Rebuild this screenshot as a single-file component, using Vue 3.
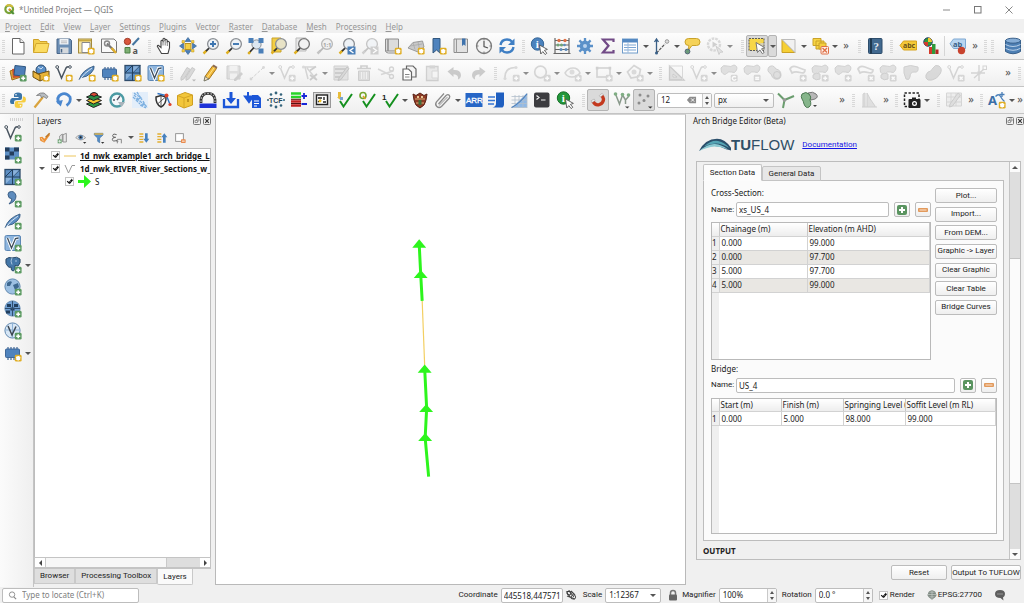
<script setup>
import { ref } from 'vue'

/* ---------- icon building blocks (18 x 18 grid) ---------- */
const badge = (fill, sign = 'M14.2 12.2v4M12.2 14.2h4', x = 0, y = 0) =>
  `<g transform="translate(${x} ${y})"><rect x="10.8" y="10.8" width="6.8" height="6.8" rx="1.4" fill="${fill}"/><path d="${sign}" stroke="#fff" stroke-width="1.5" fill="none"/></g>`
const add = badge('#5c9a62')
const star = badge('#e0ae24', 'M14.2 12v4.4M12.2 13l4 2.4M16.2 13l-4 2.4')
const greyAdd = badge('#c6c6c6')
const greyX = badge('#c6c6c6', 'M12.7 12.7l3 3M15.7 12.7l-3 3')
const greyDash = badge('#c6c6c6', 'M12.2 13.4h4M12.2 15.2h4')
const lens = (inside = '', c = '#8b8f94', f = '#eef2f6') =>
  `<path d="M1.5 16.5l3-2.8" stroke="#e0b020" stroke-width="2.4"/><path d="M4 14.2l3.4-3.4" stroke="#333" stroke-width="1.8"/><circle cx="11" cy="7" r="5.4" fill="${f}" stroke="${c}" stroke-width="1.3"/>${inside}`
const vee = (c = '#4a5560') =>
  `<path d="M2 3l4.5 11L11 4q1-1.5 4-1" fill="none" stroke="${c}" stroke-width="1.5"/><circle cx="2.2" cy="3" r="1.4" fill="#fff" stroke="${c}"/><circle cx="15" cy="3" r="1.3" fill="#fff" stroke="${c}"/>`
const feather = '<path d="M1 16Q4 6 16 2Q17 5 13 9Q9 13 3.5 13.5z" fill="#5d8fc4" stroke="#36597f" stroke-width=".9"/><path d="M1.5 16Q6 9 14 4" stroke="#d8e6f4" fill="none"/>'
const chip = '<path d="M4 3v13M7 3v13M10 3v13M13 3v13" stroke="#3f6797" stroke-width="1.2"/><rect x="1.5" y="5" width="14" height="8.5" rx="1" fill="#4f83bd" stroke="#3f6797"/>'
const mesh = '<rect x="1" y="1.5" width="15" height="15" fill="#5d8fc4" stroke="#2f4c6b" stroke-width="1.3"/><path d="M1 9h15M8.500 1.500v15M1 9l7.500-7.500M8.500 9l7.500-7.500M8.500 16.500V9" stroke="#23405f" fill="none"/><path d="M9.200 8.300V2.200h5.800zM1.700 15.800V9.700h6.100z" fill="#9fc2e6" opacity=".7"/>'
const vbox = '<rect x="1" y="1.500" width="15.500" height="15" rx="1.500" fill="#8fb6df" stroke="#5c87b5"/><path d="M3.500 4l4 10 4-9.500 3-.5" stroke="#fff" stroke-width="3.200" fill="none"/><path d="M3.500 4l4 10 4-9.500 3-.5" stroke="#3d4c5b" stroke-width="1.300" fill="none"/>'
const globe = (f) => `<circle cx="8.500" cy="8.500" r="7.600" fill="${f}" stroke="#6289b0"/>`
const greyPoly = '<path d="M1 4q2-3.500 6-2t7-1q4 1 2.500 5t-5 2q-3-1-5 1.500T1.500 8z" fill="#d3d3d3" stroke="#bcbcbc"/>'
const greyLoop = '<path d="M1 5q2-4 7-2t8 3q0 4-5 2.500T3 9z" fill="none" stroke="#c4c4c4" stroke-width="1.800"/>'
const check = '<path d="M5 10l3.500 5.500L17 3" stroke="#15901f" stroke-width="2" fill="none"/>'
const cursor = '<path d="M9.500 8l1.300 9 2-2.400 2.400 3 1.600-1.400-2.400-2.800 3-1z" fill="#fff" stroke="#555" stroke-width=".9"/>'

const icons = {
  new: '<path d="M3.500 1.500h7.500l4 4v11.500h-11.500z" fill="#fff" stroke="#666"/><path d="M11 1.500v4h4" fill="#eee" stroke="#666"/>',
  open: '<path d="M1.500 15.500v-13h5l1.500 2h7v3" fill="#f3cf4d" stroke="#cfa228"/><path d="M1.500 15.500l2.500-9h13l-2 9z" fill="#fbdc62" stroke="#d3a82e"/>',
  save: '<path d="M2 2h13l1.500 1.500V16.500H2z" fill="#6c8fb5" stroke="#486689"/><path d="M4.500 2h9v5.500h-9z" fill="#eef2f6"/><path d="M5 10.500h8.500v6H5z" fill="#d5d9dd"/><path d="M6.500 12v3.500" stroke="#486689" stroke-width="1.500"/><path d="M6 4h6M6 5.700h6" stroke="#aaa" stroke-width=".7"/>',
  layout: '<rect x="1.500" y="2" width="13" height="14" fill="#f5e5a5" stroke="#a48a3a"/><path d="M5 5.500h8v10H5z" fill="#fff" stroke="#888"/><path d="M2 3.500h12" stroke="#c8a840" stroke-width="1.800"/>' + star,
  layouts: '<path d="M1.500 2h12.500l2.500 2.500v11H1.500z" fill="#fafafa" stroke="#777"/><path d="M7 6.500l7.500 7.500" stroke="#777" stroke-width="2.200"/><circle cx="7" cy="6.500" r="2.500" fill="none" stroke="#888" stroke-width="1.400"/><path d="M11.500 11l4.500 5" stroke="#dfae2d" stroke-width="2.400"/>',
  style: '<circle cx="4.500" cy="4.500" r="3.200" fill="#d9573d" stroke="#9f3a28"/><path d="M9.500 8L16 1" stroke="#44749f" stroke-width="2"/><path d="M2 10.500h5v5.500H2z" fill="#7db073" stroke="#4d8046"/><text x="9.500" y="16.500" font-size="9" font-family="Noto Sans" font-weight="bold" fill="#555">a</text>',
  hand: '<path d="M5.500 16.500L2 10.500q-1.500-2 .3-2.200L5 10.500V4q.8-1.600 2 0V2q1-1.500 2 0v1q1.200-1.300 2.200.3v1.500q1.500-1 2.300.5V11l-1.500 5.500z" fill="#fff" stroke="#444" stroke-width="1.100"/><path d="M7 4v4.500M9.200 3v5.500M11.300 5v4" stroke="#666" stroke-width=".8"/>',
  panto: '<rect x="6" y="6.500" width="6" height="6" fill="#f5cf45" stroke="#b8921f"/><path d="M9 .5l3 4H6zM9 17.500l3-4H6zM.5 9l4-3v6zM17.500 9l-4-3v6z" fill="#4a7fb8" stroke="#335f90" stroke-width=".6"/><path d="M3 3.500h2.500v2.500H3zM12.500 3.500h2.500v2.500h-2.500zM3 12.500h2.500V15H3zM12.500 12.500h2.500V15h-2.500z" fill="#f5cf45" stroke="#b8921f" stroke-width=".5"/>',
  zin: lens('<path d="M11 4v6M8 7h6" stroke="#3b74b0" stroke-width="1.900"/>'),
  zout: lens('<path d="M8 7h6" stroke="#3b74b0" stroke-width="1.900"/>'),
  zfull: '<circle cx="9.500" cy="7.500" r="4.600" fill="#dbe6f1" stroke="#8b8f94"/><path d="M1.500 1h5v5h-5zM11.500 1h5v5h-5zM11.500 11.500h5v5h-5z" fill="#4a7fb8"/><path d="M1.500 16.500L7 10.500" stroke="#333" stroke-width="1.800"/><path d="M1.200 16.800l2-2" stroke="#e0b020" stroke-width="2.400"/>',
  zsel: '<path d="M2 1h9v14H2z" fill="#f3cf45" stroke="#c9a22a"/>' + lens('', '#8b8f94', '#e8e3c6'),
  zlayer: '<path d="M3 1h10v13H3z" fill="#e8e8e8" stroke="#bbb"/>' + lens('', '#777', '#f2f2f2'),
  z11: lens('<text x="7" y="9.500" font-size="6" font-weight="bold" font-family="Noto Sans" fill="#777">1:1</text>', '#999', '#eee').replace('#e0b020', '#aaa').replace('#333', '#999'),
  zlast: lens() + '<rect x="9.500" y="9.500" width="8" height="8" fill="#4a7fb8"/><path d="M15.500 11l-3.500 2.500 3.500 2.500" stroke="#fff" stroke-width="1.400" fill="none"/>',
  znext: lens('', '#aaa').replace('#e0b020', '#bbb').replace('#333', '#aaa') + '<rect x="9.500" y="9.500" width="8" height="8" fill="#bbb"/><path d="M12 11l3.500 2.500-3.500 2.500" stroke="#fff" stroke-width="1.400" fill="none"/>',
  newmap: '<path d="M1.500 2h2.500v12H1.500zM4 2h10.500v12H4z" fill="#dcdcdc" stroke="#8d8d8d"/><path d="M1.500 14q.5 2 3 2h8" fill="none" stroke="#8d8d8d"/>' + star,
  new3d: '<path d="M1 11L6 5.500 15.500 4l1.500 6-6 5z" fill="#c9c9c9" stroke="#9a9a9a"/><path d="M6 5.500l2 7M11 5l1.500 7M3 9l12-2" stroke="#aaa" stroke-width=".8"/>' + star,
  bmnew: '<path d="M4 1.500h7V16l-3.500-3L4 16z" fill="#4f83bd" stroke="#33587f"/>' + star,
  bm: '<path d="M2 2h13.500v13.500H2z" fill="#e2e2e2" stroke="#8d8d8d"/><path d="M4.500 2v13.500" stroke="#999"/><path d="M10 1.500h3.500v7.500l-1.700-1.600L10 9z" fill="#3f73ad"/>',
  clock: '<circle cx="9" cy="9" r="7.500" fill="#f3f3f3" stroke="#7a7a7a" stroke-width="1.300"/><path d="M9 4v5.500l4 1.500" stroke="#555" stroke-width="1.200" fill="none"/><path d="M9 2v1.500M9 14.500V16M2 9h1.500M14.500 9H16" stroke="#777"/>',
  refresh: '<path d="M2.500 8q1-5.500 6.500-5.500 3 0 5 2.300" stroke="#3f7fc4" stroke-width="2.400" fill="none"/><path d="M16.500 1.500v6.500h-6.500z" fill="#3f7fc4"/><path d="M15.500 10q-1 5.500-6.500 5.500-3 0-5-2.300" stroke="#3f7fc4" stroke-width="2.400" fill="none"/><path d="M1.500 16.500v-6.500h6.500z" fill="#3f7fc4"/>',
  identify: '<circle cx="7.500" cy="7" r="6.200" fill="#4b82bd" stroke="#376798"/><text x="5.800" y="11" font-size="11" font-weight="bold" font-family="Liberation Serif" fill="#fff">i</text>' + cursor,
  abacus: '<path d="M2 1v15.500M16 1v15.500M.5 16.500h17M2 3.500h14M2 8h14M2 12.500h14" stroke="#676767" stroke-width="1.200"/><g fill="#de6f45"><circle cx="6" cy="3.500" r="1.700"/><circle cx="12" cy="3.500" r="1.700"/></g><g fill="#70a375"><circle cx="5" cy="8" r="1.500"/><circle cx="8.500" cy="8" r="1.500"/></g><g fill="#5d8bbb"><circle cx="8" cy="12.500" r="1.500"/><circle cx="13" cy="12.500" r="1.500"/><circle cx="11.500" cy="8" r="1.300"/></g>',
  gear: '<path d="M9 1v16M1 9h16M3.400 3.400l11.200 11.200M14.600 3.400L3.400 14.600" stroke="#5b91c9" stroke-width="2.300"/><circle cx="9" cy="9" r="5.400" fill="#5b91c9"/><circle cx="9" cy="9" r="2" fill="#b9d3ee"/>',
  sigma: '<path d="M14.500 5V2.500H4l5.500 6.300L4 15.500h10.500V13" stroke="#714a86" stroke-width="2.200" fill="none"/>',
  table: '<rect x="1.500" y="2" width="15" height="14" fill="#fff" stroke="#6f9bc9"/><path d="M1.500 2h15v3.500h-15z" fill="#5489c2"/><path d="M3 8h12M3 10.500h12M3 13h12" stroke="#7ba5d3" stroke-width="1.200"/><path d="M7 5v11" stroke="#9dbbdc"/>',
  measure: '<path d="M4.500 16.500V3M2.500 5l2-3 2 3" stroke="#395f87" stroke-width="1.300" fill="none"/><path d="M4.500 16L13 7" stroke="#555" stroke-width="1.200" stroke-dasharray="3 1"/><circle cx="4.500" cy="16" r="1.500" fill="#395f87"/><circle cx="15" cy="4.500" r="1.800" fill="#ddd" stroke="#999"/>',
  tip: '<path d="M2 5q0-3.500 3.500-3.500h8Q17 1.500 17 5t-3.500 3.500H9L5.500 13l.3-4.500Q2 8.500 2 5z" fill="#f5d258" stroke="#c9a22a"/><circle cx="4.500" cy="14.500" r="2.400" fill="#6a9a7a" stroke="#567"/>',
  play: '<circle cx="8" cy="7.500" r="6" fill="none" stroke="#c9c9c9" stroke-width="2.400" stroke-dasharray="2.600 1"/><path d="M6.500 4.500l5 3-5 3z" fill="#bbb"/><path d="M10 9l7 6-3 .3-1 2.200z" fill="#ddd" stroke="#bbb"/>',
  select: '<rect x="1" y="1.500" width="15" height="12" fill="#f7d748"/><path d="M12.500 2v4h3.500v7.500h-8v-1.500h4" fill="#cfcfcf" opacity=".8"/><rect x="1" y="1.500" width="15" height="12" fill="none" stroke="#5b5b5b" stroke-dasharray="2 1"/><path d="M8 5.500l1.500 10 2.300-2.600 2.600 3.800 1.800-1.300-2.700-3.600 3-1.300z" fill="#fff" stroke="#777"/>',
  selval: '<path d="M2 2.500l13 13H2z" fill="#f5cf35" stroke="#caa024"/><path d="M2 2.500h13v13z" fill="#f1f1f1" stroke="#bbb"/>',
  desel: '<path d="M2 1.500h8v7H2zM5 4h8v8H5z" fill="#f7d443" stroke="#c9a22a"/><path d="M8 6h7v6H8z" fill="#f5cf3f" stroke="#c9a22a"/><rect x="10" y="9.500" width="7.500" height="7.500" rx="1" fill="#fff1ea" stroke="#de7048"/><path d="M11.500 11l4.500 4.500M16 11l-4.500 4.500" stroke="#de7048" stroke-width="1.300"/>',
  help: '<rect x="2.500" y="1.500" width="13.500" height="15" rx="1" fill="#41698f" stroke="#2e4d6b"/><path d="M5 1.500v15" stroke="#1f3950" stroke-width="2"/><text x="7.500" y="13" font-size="11" font-family="Liberation Serif" font-weight="bold" fill="#e7eef5">?</text>',
  abc: '<path d="M4.500 4h13v9h-13L1 8.500z" fill="#f4c939" stroke="#d7a41f"/><text x="4" y="11" font-size="7" font-weight="bold" font-family="Noto Sans" fill="#6a531a">abc</text>',
  diagram: '<circle cx="6" cy="5" r="4.200" fill="#2f9a3b" stroke="#236"/><path d="M6 5V.8A4.200 4.200 0 0 1 10 5z" fill="#efc52f"/><path d="M6 5H1.800A4.200 4.200 0 0 0 6 9.200z" fill="#d43a2a"/><path d="M7 10h3v7H7z" fill="#d43a2a"/><path d="M10 7h3.500v10H10z" fill="#2f9a3b"/><path d="M13.500 12.500H16.500V17h-3z" fill="#b42520"/>',
  label: '<path d="M4.500 2h12v9.500h-12L1 6.800z" fill="#b8d5f0" stroke="#7fa9d3"/><text x="4" y="9.500" font-size="7.500" font-weight="bold" font-family="Noto Sans" fill="#3a5f86">ab</text><circle cx="12.500" cy="13.500" r="3.700" fill="#c8432e"/>',
  db: '<path d="M1.500 3.500v11q7.500 4.500 15 0v-11z" fill="#4d7fb4" stroke="#375f8a"/><ellipse cx="9" cy="3.700" rx="7.500" ry="2.500" fill="#86add6" stroke="#375f8a"/><path d="M1.500 7.500q7.500 4 15 0M1.500 11.300q7.500 4 15 0" stroke="#b9d0e8" fill="none"/>',

  source: '<path d="M1 7l9-3 2 9-9 3z" fill="#e0a63a" stroke="#a06f1e"/><path d="M3 5l8-1 1 9-8 1z" fill="#c8522f"/><path d="M6 1.500l10.500 1.200-1 9.500L5 11z" fill="#4d7fb8" stroke="#2f5681"/>' + add,
  pack: '<circle cx="9" cy="6" r="5" fill="#5a8fc7" stroke="#2b4c70"/><path d="M6 3l3 2 2-2" stroke="#cfe0f2" fill="none"/><path d="M1 7l5 3 11-3v6l-9 4-7-4z" fill="#e9b43d" stroke="#6e5216"/><path d="M1 7l7 4v6" stroke="#6e5216" fill="none"/>' + star,
  vnew: vee() + star, feathernew: feather + star, chipnew: chip + star, meshnew: mesh + star, vboxnew: vbox + star,
  pencils: '<path d="M2 13.500L8 3.500l3 1.800-6 9.500-3 1.500zM7 13l6-9.500 3 1.800-6 9.500-3 1.500z" fill="#c9c9c9" stroke="#b1b1b1"/><path d="M13 15.500h4l-2 2z" fill="#999"/>',
  pencil: '<path d="M3 12.500L10.500 2l4 2.500L7 15z" fill="#f1b93a" stroke="#a5761d"/><path d="M3 12.500l4 2.500-5 2z" fill="#f3dfbf" stroke="#776"/><path d="M5 13.800L12.500 3.200" stroke="#ffe28a"/><path d="M10.500 2l1-1.500 4 2.600-1 1.400z" fill="#8a6a55"/>',
  savegrey: '<path d="M2 2h13v13H2z" fill="#d2d2d2" stroke="#b9b9b9"/><path d="M4.500 2h8v5h-8zM5 9.500h7V15H5z" fill="#eee"/><path d="M9 15l7-7 2 2-7 7H9z" fill="#bbb"/>',
  linegrey: '<path d="M3 15L15 4" stroke="#bbb" stroke-dasharray="3 1.500"/><circle cx="3" cy="15" r="1.400" fill="#c8c8c8"/><circle cx="15.500" cy="3.500" r="1.400" fill="#c8c8c8"/>',
  vgrey: vee('#c2c2c2') + greyAdd,
  vertex: '<path d="M2 3h12M4 3l3 12M6 4l9 11" stroke="#c2c2c2" stroke-width="1.500"/><path d="M9 6.500l6-4M9 11l7 5M9 16l7-6" stroke="#b6b6b6" stroke-width="1.700"/><circle cx="2.500" cy="3" r="1.600" fill="#ccc"/>',
  multiedit: '<path d="M2 2h14v14H2z" fill="#d9d9d9" stroke="#bbb"/><path d="M3 5h11M3 9h9M3 13h7" stroke="#aaa" stroke-width="1.300"/><path d="M7 14l8-11 2 1.500-8 11-3 1z" fill="#c9c9c9" stroke="#aaa"/>',
  trash: '<path d="M2 4.500h14M6 4.500V2h6v2.500" stroke="#b9b9b9" stroke-width="1.700" fill="none"/><path d="M3.500 7h11v9.500h-11z" fill="#d0d0d0" stroke="#b9b9b9"/><path d="M6.500 8v7M9 8v7M11.500 8v7" stroke="#eee"/>',
  cut: '<path d="M1 5l12 6M4 10.500L16.500 7" stroke="#c6c6c6" stroke-width="1.500"/><circle cx="14.500" cy="12.500" r="2" fill="none" stroke="#c0c0c0" stroke-width="1.300"/><circle cx="14.500" cy="5" r="2" fill="none" stroke="#c0c0c0" stroke-width="1.300"/>',
  copy: '<path d="M6.500 2h6.500l3 3v8H6.500z" fill="#f4f4f4" stroke="#666" stroke-width="1.200"/><path d="M3 5h5.500l3 3v8H3z" fill="#fff" stroke="#666" stroke-width="1.200"/><path d="M5 10.500h4.500M5 13h4.500" stroke="#888"/>',
  paste: '<path d="M3.500 2.500h11.500v14H3.500z" fill="#e2e2e2" stroke="#bcbcbc" stroke-width="1.300"/><path d="M6.500 1.500h5.500v3H6.500z" fill="#c3c3c3"/><path d="M9 7h6v7H9z" fill="#f4f4f4" stroke="#c8c8c8"/>',
  undo: '<path d="M1.500 7.500L7.500 3v3q7-.5 7.500 5 0 3-3 4.500 1-5-4.500-5.200V13z" fill="#b4b4b4"/>',
  redo: '<path d="M16.500 7.500L10.500 3v3Q3.500 5.500 3 11q0 3 3 4.500-1-5 4.500-5.200V13z" fill="#b4b4b4"/>',
  curve: '<path d="M3 15Q2 4 13 3.500" stroke="#c4c4c4" stroke-width="1.700" fill="none"/><circle cx="3" cy="14.500" r="1.500" fill="#ccc"/><circle cx="14" cy="3.500" r="1.500" fill="#ccc"/>' + greyAdd,
  circ: '<circle cx="7.500" cy="8" r="5.800" fill="none" stroke="#c4c4c4" stroke-width="1.700"/>' + greyAdd,
  ell: '<path d="M1 9q3-5 8-5t7 5q-3 4-8 4T1 9z" fill="none" stroke="#c4c4c4" stroke-width="1.500"/><circle cx="8" cy="8" r="2.500" fill="#cfcfcf"/>' + greyAdd,
  rect: '<rect x="2" y="4" width="13" height="9" fill="none" stroke="#c4c4c4" stroke-width="1.700"/><path d="M.8 2.800h2.600v2.600H.8zM13.600 2.800h2.600v2.600h-2.600z" fill="#bbb"/>' + greyAdd,
  poly: '<path d="M8 1.500l6.500 4-1.500 7-8 1.500-3.500-6z" fill="none" stroke="#c4c4c4" stroke-width="1.700"/><circle cx="8" cy="8" r="2.500" fill="#ccc"/>' + greyAdd,
  tri: '<path d="M2.500 2v14H17z" fill="#d3d3d3" stroke="#b4b4b4" stroke-width="1.300"/><path d="M6 10v3h4z" fill="#f8f8f8" stroke="#b4b4b4"/><path d="M2.500 2h13v14" fill="none" stroke="#c9c9c9"/>',
  p1: greyPoly + badge('#c6c6c6', 'M15.800 13.200a1.900 1.900 0 1 0 .2 1.800'), p2: greyPoly + greyDash,
  p3: '<path d="M3 3q4-3 7 2 5 1 5 6t-6 4q-3-1-4-5Q0 7 3 3z" fill="#d3d3d3" stroke="#b9b9b9"/><circle cx="11" cy="11" r="3.500" fill="none" stroke="#b4b4b4"/>',
  p4: greyLoop + greyAdd, p5: greyPoly + '<path d="M2 11q3-3 7-1v5q-4 2-7-1z" fill="#d3d3d3" stroke="#bbb"/>' + greyAdd, p6: greyPoly + greyAdd, p7: greyLoop + greyX,
  p8: greyPoly + '<path d="M2 11q3-3 7-1v5q-4 2-7-1z" fill="#d3d3d3" stroke="#bbb"/>' + greyX,
  p9: '<path d="M2 3q6-3 14 0 1 6-4 5-4 0-4 5-1 4-4 2Q1 9 2 3z" fill="#d0d0d0" stroke="#bbb"/>',
  p10: '<path d="M3 8q3 0 5-4t6-2q4 3 1 8t-8 6-6-2 2-6z" fill="#cbcbcb" stroke="#b9b9b9"/>',
  vsplit: vee('#c2c2c2') + greyX,
  trim: '<path d="M9 1v6M1 9h6M9 11v6M11 9h4M4 14l10-9" stroke="#c2c2c2" stroke-width="1.400"/><circle cx="9" cy="9" r="2" fill="#c2c2c2"/><rect x="13" y="2" width="3.500" height="3.500" fill="none" stroke="#c2c2c2"/>',

  python: '<path d="M9 1.500q-4 0-4 2.500v2h4.500v1H3q-2 .5-2 3.500T3.500 13H5v-2q0-2 2.500-2H11q2-.2 2-2V4q0-2.500-4-2.500z" fill="#3b75a8"/><path d="M9.500 17q4 0 4-2.500v-2H9v-1h6q2-.5 2-3T15 5.500h-1.200V8q0 2-2.300 2H8q-2.300 0-2.300 2v2.500Q5.700 17 9.500 17z" fill="#f6cd3f"/><circle cx="7" cy="3.800" r=".8" fill="#fff"/><circle cx="11.500" cy="14.800" r=".8" fill="#fff"/>',
  hammer: '<path d="M2.500 16.500L11 6" stroke="#d9a33d" stroke-width="2.200"/><path d="M4.500 4.500Q8 1 12 2l4 3.500-1.500 2-3.300-2.200L9.500 7 8.500 4.200z" fill="#b7bcc1" stroke="#777" stroke-width=".8"/>',
  reload: '<path d="M4 12.500Q1 6 6 3.500t9 2.500q1.500 5-3.500 8.500" stroke="#4a87cf" stroke-width="2.800" fill="none"/><path d="M.8 10.500l7-1.500-2 6.500z" fill="#4a87cf"/>',
  layers: '<path d="M1.500 13l7 3.500 8-3.500-8-3z" fill="#2c9a44" stroke="#222"/><path d="M1.500 9.500l7 3.500 8-3.500-8-3z" fill="#f2c531" stroke="#222"/><path d="M1.500 6l7 3.500 8-3.500-8-3z" fill="#2b8b47" stroke="#222"/><path d="M5 3.500q4-4 8 0l-4 2z" fill="#dc4733" stroke="#222"/>',
  dial: '<circle cx="9" cy="9" r="6.500" fill="#f3f8fa" stroke="#4b9aa3" stroke-width="2.300"/><path d="M9 9l3-4M5 9h2" stroke="#556" stroke-width="1.300"/><path d="M10 11h7l-3.500 5z" fill="#a9b4bb"/>',
  scatter: '<rect x="1" y="1" width="16" height="16" fill="#e3eefa"/><path d="M3 2l7 5-4 1 8 6-5 0 6 3M6 1l5 8M2 6l7 7M12 10l4 7M3 4l9 9" stroke="#7db0e0" stroke-width="1.300" stroke-dasharray="3 1" fill="none"/>',
  shield: '<path d="M2 6l5-1.500L12 6q.5 7-5 10Q1.500 13 2 6z" fill="#fff" stroke="#333" stroke-width="1.500"/><path d="M3.500 13L11 6.500M7 5v10" stroke="#555"/><path d="M3.500 2.500l9 2 3.500 9" stroke="#3074c5" stroke-width="1.400" fill="none"/><circle cx="12.500" cy="4.500" r="2" fill="#e0442c"/><circle cx="16" cy="13.500" r="1.600" fill="#e0442c"/>',
  box: '<path d="M1.500 4.500L9 1.500l7.500 2.500v10L8 17l-6.500-3z" fill="#f2c63b" stroke="#cf9f20"/><path d="M1.500 4.500L8 7l8.500-3M8 7v10" stroke="#d6a626" fill="none"/><path d="M12 8v3" stroke="#a77c14" stroke-width="1.300"/>',
  arch: '<path d="M2 12V8.500Q2.800 2.300 9 2.300T16 8.500V12" fill="none" stroke="#333" stroke-width="2.800"/><path d="M2 11V8.500Q2.800 2.300 9 2.300T16 8.500V11" fill="none" stroke="#bbb" stroke-width="1.200" stroke-dasharray="1.500 1.500"/><path d="M.5 12.500h17v4.500H.5z" fill="#1e33d8"/>',
  dl: '<path d="M2 8v8h14V8" stroke="#1c56d8" stroke-width="2.300" fill="none"/><path d="M7.500 1h3v6h3.500L9 13 4 7h3.500z" fill="#1c56d8"/>',
  dlfile: '<path d="M8 4h6l3 3v10H8z" fill="#1c56d8"/><path d="M10 10h5M10 12.500h5M10 15h3" stroke="#fff" stroke-width="1.100"/><path d="M4 1v5M1 5.500h8L5 11z" fill="#1c56d8" stroke="#1c56d8" stroke-width="2"/>',
  tcf: '<g fill="#35647b"><circle cx="9" cy="2" r="1.400"/><circle cx="4" cy="3.500" r="1.300"/><circle cx="14" cy="3.500" r="1.300"/><circle cx="9" cy="16" r="1.400"/><circle cx="4" cy="14.500" r="1.300"/><circle cx="14" cy="14.500" r="1.300"/><circle cx="1" cy="9" r="1"/><circle cx="17" cy="9" r="1"/></g><text x="2" y="11.500" font-size="7" font-weight="bold" font-family="Liberation Sans" fill="#1f4457">TCF</text>',
  bars: '<path d="M1 2.500h10M1 6h10" stroke="#27d427" stroke-width="2.400"/><path d="M1 10.500h10M1 14.500h10" stroke="#c22020" stroke-width="2.400"/><path d="M1 8.300h10M1 12.500h10" stroke="#511"/><path d="M14 2v6M11.500 5h5.500M11.500 13h5.500" stroke="#1726d8" stroke-width="1.800"/>',
  calc: '<rect x=".5" y="1.500" width="17" height="15" fill="#ddd" stroke="#999"/><rect x="3.500" y="4" width="11" height="9.500" fill="#fff" stroke="#222" stroke-width="1.400"/><path d="M5 7h4M11 6v3M5 11l3-2M10 11h3" stroke="#222" stroke-width="1.400"/><circle cx="7" cy="10" r="1.400" fill="#f0c020"/>',
  ck1: check + '<path d="M3 1h3v5H3zM2 6h5L4.500 8.500z" fill="#e8bd3b"/><path d="M5 6h3v3H5z" fill="#7aa4d0"/>',
  ck2: check + '<circle cx="5" cy="4.500" r="3" fill="none" stroke="#74a52e" stroke-width="1.600"/><path d="M5 5l2.500 3" stroke="#e0a020" stroke-width="1.500"/>',
  ck3: check + '<text x="1" y="8.500" font-size="8" font-weight="bold" font-family="Liberation Sans" fill="#222">1</text>',
  crest: '<path d="M2 3l3 1.500L9 2l4 2.500L16 3l-1 6q-1 6-6 8-5-2-6-8z" fill="#8f3a25" stroke="#5a2317"/><path d="M4 8h10M5 12h8" stroke="#d9b079"/><path d="M6 5h2v2H6zM10 5h2v2h-2z" fill="#e8c896"/><path d="M7.500 9h3v5h-3z" fill="#3f6a3a"/>',
  clip: '<path d="M4.500 13L12 4.500q2-1.500 3.200-.2t0 3L7.500 15.500q-2.500 2-4.700 0t-.3-4.700L10 2.500" stroke="#8a8a8a" stroke-width="1.300" fill="none"/><path d="M5 14.500L13.500 6" stroke="#bbb" stroke-width="1.300"/>',
  arr: '<rect x=".5" y="2" width="17" height="14" fill="#2766c6"/><text x="1" y="12" font-size="8" font-family="Liberation Sans" fill="#fff" stroke="#fff" stroke-width=".3">ARR</text>',
  bluedoc: '<path d="M9 1.500h8v12q0 2-1.500 3H5.500q3.500-1 3.500-4z" fill="#1f5fc0"/><path d="M1 6h7M1 9.500h7M1 13h6" stroke="#3676d3" stroke-width="1.700"/>',
  gridplot: '<path d="M17 2v14.500H2z" fill="#8fb8e6"/><path d="M1.500 5.500h15.500M1.500 9h15.500M1.500 12.500h15.500M1.500 16.500h15.500M5 4v13M9 4v13M13 4v13M17 2v15" stroke="#b3bfcc" stroke-width=".8"/><path d="M1.500 16.500Q9 13 17 3" stroke="#4a7db8" stroke-width="1.100" fill="none"/>',
  term: '<rect x="1" y="1.500" width="15.500" height="15" rx="2" fill="#3c3c40"/><path d="M3.500 4.500l2.500 2-2.500 2M8 9h4.500" stroke="#f2f2f2" stroke-width="1.200" fill="none"/>',
  info: '<circle cx="7.500" cy="7" r="6.200" fill="#23973b" stroke="#187029"/><text x="5.800" y="11" font-size="11" font-weight="bold" font-family="Liberation Serif" fill="#fff">i</text>' + cursor,
  magnet: '<path d="M4 10.500q2.500 4.500 6.500 3t4-5.500q-.5-2.500-2.500-4" stroke="#c4391f" stroke-width="3.400" fill="none"/><path d="M2 9.800l3.200-1.800 1 1.600L3 11.500zM10.300 4.600l2.800-2.300 1.200 1.400-2.800 2.400z" fill="#eee" stroke="#999" stroke-width=".5"/>',
  vsnap: '<path d="M2.500 3l4 10 3-9M9.500 4l3 5 3.500-4M12.500 9v4" stroke="#8a9a8c" stroke-width="1.500" fill="none"/><g fill="#7fae83"><circle cx="2.500" cy="3" r="1.800"/><circle cx="9.500" cy="3.500" r="1.800"/><circle cx="15.500" cy="4" r="1.800"/></g><path d="M12 15.500h4.500l-2.200 2z" fill="#444"/>',
  dots: '<g fill="#8c8c8c"><circle cx="5" cy="4" r="1.500"/><circle cx="13" cy="5" r="1.500"/><circle cx="9" cy="9.500" r="1.500"/><circle cx="4" cy="12" r="1.500"/></g><path d="M13 15.500h4.500l-2.200 2z" fill="#333"/>',
  ypoly: '<path d="M1 2.500l6.500 6.500L17 5M7.500 9L6 17" stroke="#6a9d6e" stroke-width="2" fill="none"/><circle cx="7.500" cy="9" r="1.800" fill="#999"/>',
  blob: '<path d="M8 2q5-2 8 1t-1 5l-4 1z" fill="#b7b7b7" stroke="#777"/><path d="M2 3q4-3 7 0t1 6q2 5-1 7t-5-3q-.5-3-2-5T2 3z" fill="#86b58b" stroke="#4a7950"/><path d="M13 14h4l-2 2z" fill="#444"/>',
  hist: '<path d="M3 16V3l2-1v14M7 16V2q2 5 8 13v1" fill="#d5d5d5" stroke="#bcbcbc"/><path d="M2 16h15" stroke="#bcbcbc"/>',
  shot: '<rect x="1.500" y="2" width="14.500" height="13.500" fill="none" stroke="#222" stroke-width="1.500" stroke-dasharray="2.400 1.600"/><rect x="5.500" y="8" width="12" height="9" rx="1" fill="#222"/><path d="M9 6.500h4v2H9z" fill="#222"/><circle cx="11.500" cy="12.500" r="2.500" fill="#fff"/><circle cx="11.500" cy="12.500" r="1.200" fill="#222"/>',
  gridpen: '<path d="M1.500 2h15v13h-15zM1.500 6h15M1.500 11h15M6 2v13M11 2v13" fill="#e8e8e8" stroke="#c4c4c4"/><path d="M5 13l8-11 2.500 2-8 11-3 1z" fill="#d2d2d2" stroke="#b5b5b5"/>',
  atext: '<text x="0" y="13.500" font-size="13" font-weight="bold" font-family="Noto Sans" fill="#3b6fa8">A</text><path d="M7.500 5.500q3-3.500 5 0t4 5M14 1v5M11.500 3.500h5" stroke="#4a7fb8" stroke-width="1.300" fill="none"/>' + star,

  vadd: vee() + add,
  raster: '<path d="M1 1.500h14v12H1z" fill="#5d8fc4"/><path d="M1 1.500h4.500v4H1zM10 1.500h5v4h-5zM5.500 5.500H10v4H5.500zM1 9.500h4.500v4H1z" fill="#243e5c"/>' + add,
  meshadd: mesh + add,
  comma: '<path d="M4 4.500q0-3 3.500-3T12 6q0 5.500-7 8 3-3 2.800-5.200Q4 8.500 4 4.500z" fill="#5d8bbd" stroke="#3c5f86"/>' + add,
  featheradd: feather + add, vboxadd: vbox + add,
  pg: '<path d="M2 3q3-2.500 6-1 5-2 8 1 1 4-2 7l-3-.5q.5 5-2 5.500-2 0-2-4-1.500 1-3-.5Q1 8 2 3z" fill="#4477a8" stroke="#2c4b6b"/><path d="M8 2q-2 3 0 6.500M12 4v2" stroke="#a8c3df" fill="none"/>' + add,
  wms: globe('#9cc0e3') + '<path d="M3 5q3-3 5-1l-2 4-3 0zM9 7l5-2 1 4-4 3z" fill="#3e6890"/>' + add,
  wcs: globe('#6f9fd2') + '<path d="M3 4h4v3H3zM10 4h4v3h-4zM6.500 7.500h4v3h-4zM2 10.500h4v3H2z" fill="#223f5e"/><path d="M1 8.500h15M8.500 1v15" stroke="#2f4f70"/>' + add,
  wfs: globe('#d6e6f5') + '<path d="M1 8h15M8.500 1v15" stroke="#8eb2d6"/><path d="M4 4l4 9 4-8.500" stroke="#3b4650" stroke-width="1.500" fill="none"/>' + add,

  brush: '<path d="M1 8l4-1 3 3 7-7 1.500 1.500L11 12l-3 4-6-3z" fill="#ed9136"/><path d="M3 9l4 5" stroke="#fff" stroke-width=".8"/><path d="M10 8l6-6" stroke="#b9772a" stroke-width="2.200"/>',
  group: '<path d="M4 15V6l4-3v12M9 15V4l5-2v13z" fill="#e9e9e9" stroke="#8b8b8b" stroke-width="1.300"/><path d="M1 11h6v6H1z" fill="#6fa476"/><path d="M4 12v4M2 14h4" stroke="#fff"/>',
  eye: '<path d="M1 8.500q7-8 15 0-7 7-15 0z" fill="#e6e6e6" stroke="#999" stroke-width="1.300"/><circle cx="8.500" cy="8" r="3.500" fill="#527fae"/><circle cx="8.500" cy="8" r="1.500" fill="#222"/><path d="M12 15h5l-2.500 2.500z" fill="#333"/>',
  filter: '<path d="M2 2h13v2.500L10 9v7l-3-2V9L2 4.500z" fill="#5790c9" stroke="#3a6ea5"/><path d="M2 2h13v2H2z" fill="#f0b83a"/><path d="M12 15h5l-2.500 2.500z" fill="#333"/>',
  eps: '<path d="M8.500 4Q3 1.500 2.500 5t4.500 3Q1.500 8 2 11.500t7 1" stroke="#666" stroke-width="1.500" fill="none"/><path d="M9.500 17v-6h6v6M8 14h3" stroke="#888" stroke-width="1.500" fill="none"/>',
  expand: '<path d="M2 3h6M2 7h6M2 11h6M2 15h6" stroke="#e2ae30" stroke-width="2"/><path d="M10.500 2h4v8h2.500l-4.500 6L8 10h2.500z" fill="#4681bf"/>',
  collapse: '<path d="M2 3h6M2 7h6M2 11h6M2 15h6" stroke="#e2ae30" stroke-width="2"/><path d="M10.500 16h4V8h2.500L12.500 2 8 8h2.500z" fill="#4681bf"/>',
  remove: '<rect x="2.500" y="2.500" width="11.500" height="11.500" fill="#fff" stroke="#888" stroke-width="1.300"/><rect x="10.500" y="11" width="7" height="5.500" rx="1" fill="#e98b4e"/><path d="M12 13.700h4" stroke="#fff" stroke-width="1.300"/>'
}

/* ---------- toolbars: token[:units][!] — "!" marks a pressed button ---------- */
const defaults = { grip: 8, arrow: 8, more: 14, gap: 3, sep: 4 }
const inactive = new Set(
  ('z11 znext play pencils savegrey linegrey vgrey vertex multiedit trash cut paste undo redo curve circ ell rect poly tri ' +
    'p1 p2 p3 p4 p5 p6 p7 p8 p9 p10 vsplit trim hist gridpen').split(' ')
)
const parse = (text) => {
  let off = false
  return text.split(' ').map((t) => {
    const pressed = t.endsWith('!')
    const [name, units] = t.replace('!', '').split(':')
    off = name === 'arrow' ? off : inactive.has(name)
    return { name, pressed, off, units: Number(units) || defaults[name] || 23 }
  })
}
const bar = (...groups) => groups.map(([share, text]) => ({ share, items: parse(text) }))

const toolbars = [
  bar(
    [143, 'grip:7 new open save layout layouts style'],
    [375, 'gap grip hand panto zin zout zfull zsel zlayer z11 zlast znext newmap new3d bmnew bm clock refresh'],
    [220, 'gap:2 grip identify abacus gear sigma table arrow measure arrow tip play arrow gap:4'],
    [117, 'grip select:22! arrow:9! selval arrow desel arrow more gap:2'],
    [32, 'grip help gap:1'],
    [94, 'grip:9 abc diagram sep label more:12'],
    [43, 'grip grip:6 gap:6 db']
  ),
  bar(
    [167, 'grip:7 source pack vnew feathernew chipnew meshnew vboxnew'],
    [322, 'grip:10 pencils pencil savegrey linegrey arrow vgrey vertex arrow multiedit trash cut copy paste undo redo'],
    [165, 'gap:2 grip curve arrow circ arrow ell arrow rect arrow poly arrow'],
    [370, 'gap grip tri vgrey arrow p1 p2 p3 p4 p5 p6 p7 p8 p9 p10 vsplit trim gap:10 more:16 grip']
  ),
  bar(
    [576, 'grip:7 python hammer reload arrow layers dial scatter shield box arch dl dlfile tcf bars calc ck1 ck2 ck3 arrow crest clip arrow arr bluedoc gridplot term info'],
    [273, 'gap grip magnet:22! gap:2 vsnap:22 dots:22! gap:2 tolerance:55 gap:2 units:60 ypoly blob gap:15 more'],
    [175, 'grip hist more:12 grip shot arrow gap grip gridpen more:12 grip atext arrow more:8']
  )
]

const menus = [
  ['', 'P', 'roject'], ['', 'E', 'dit'], ['', 'V', 'iew'], ['', 'L', 'ayer'], ['', 'S', 'ettings'], ['', 'P', 'lugins'],
  ['Vect', 'o', 'r'], ['', 'R', 'aster'], ['', 'D', 'atabase'], ['', 'M', 'esh'], ['Pro', 'c', 'essing'], ['', 'H', 'elp']
]
const sideTools = ['vadd', 'raster', 'meshadd', 'comma', 'featheradd', 'vboxadd', 'pg', 'wms', 'wcs', 'wfs', 'chipnew']
const withMenu = ['pg', 'chipnew']
const layerTools = ['brush', 'group', 'eye', 'filter', 'eps', 'arrow', 'expand', 'collapse', 'remove']

const tolerance = ref('12')
const sectionName = ref('xs_US_4')
const bridgeName = ref('US_4')
const sections = [['0.000', '99.000'], ['0.000', '97.700'], ['5.000', '97.700'], ['5.000', '99.000']]
const actions = ['Plot...', 'Import...', 'From DEM...', 'Graphic -> Layer', 'Clear Graphic', 'Clear Table', 'Bridge Curves']
</script>

<template>
  <div class="window">
    <header class="titlebar">
      <svg class="logo" viewBox="0 0 18 18"><circle cx="8.500" cy="8.500" r="6.300" fill="#fff" stroke="#7aa338" stroke-width="3.600"/><path d="M3.500 3.500A7 7 0 0 1 14 5" stroke="#d8bd3a" stroke-width="3" fill="none"/><path d="M8.500 8.500l7.500 8" stroke="#4f8f34" stroke-width="3.400"/><path d="M8 8l3 3" stroke="#e3972c" stroke-width="3"/></svg>
      <h1>*Untitled Project — QGIS</h1>
      <div class="winbtns">
        <button aria-label="Minimize"><svg viewBox="0 0 10 10"><path d="M1 5h7" stroke="#8a8a8a"/></svg></button>
        <button aria-label="Maximize"><svg viewBox="0 0 10 10"><rect x="1.500" y="1.500" width="6.500" height="6.500" fill="none" stroke="#777"/></svg></button>
        <button aria-label="Close"><svg viewBox="0 0 10 10"><path d="M1.500 1.500l7 7M8.500 1.500l-7 7" stroke="#888"/></svg></button>
      </div>
    </header>

    <nav class="menubar">
      <button v-for="m in menus" :key="m.join('')">{{ m[0] }}<u>{{ m[1] }}</u>{{ m[2] }}</button>
    </nav>

    <div v-for="(row, r) in toolbars" :key="r" class="toolbar">
      <div v-for="(g, i) in row" :key="i" class="group" :style="{ flexGrow: g.share }">
        <div v-for="(it, k) in g.items" :key="k" class="slot" :style="{ flexGrow: it.units }">
          <i v-if="it.name === 'grip'" class="grip"></i>
          <i v-else-if="it.name === 'sep'" class="sep"></i>
          <template v-else-if="it.name === 'gap'"></template>
          <button v-else-if="it.name === 'arrow'" class="tool" :class="{ pressed: it.pressed }" :disabled="it.off" aria-label="Open menu"><i class="tri"></i></button>
          <button v-else-if="it.name === 'more'" class="tool more" aria-label="More tools">»</button>
          <div v-else-if="it.name === 'tolerance'" class="field spin">
            <input v-model="tolerance" aria-label="Snapping tolerance" />
            <button class="clear" aria-label="Clear"><svg viewBox="0 0 12 8"><path d="M1 4l3-3.500h7v7H4z" fill="#8c8c8c"/><path d="M5.500 2.200l3.500 3.600M9 2.200L5.500 5.800" stroke="#fff"/></svg></button>
            <span class="steps"><button aria-label="Up"><i class="tri up"></i></button><button aria-label="Down"><i class="tri"></i></button></span>
          </div>
          <div v-else-if="it.name === 'units'" class="field combo flat">
            <select aria-label="Snapping units"><option>px</option></select><i class="tri"></i>
          </div>
          <button v-else class="tool" :class="{ pressed: it.pressed }" :disabled="it.off" :aria-label="it.name">
            <svg class="ico" viewBox="0 0 18 18" v-html="icons[it.name]"></svg>
          </button>
        </div>
      </div>
    </div>

    <main class="work">
      <aside class="sidebar">
        <i class="hgrip"></i>
        <div v-for="s in sideTools" :key="s" class="side">
          <button class="tool" :aria-label="s"><svg class="ico" viewBox="0 0 18 18" v-html="icons[s]"></svg></button>
          <button v-if="withMenu.includes(s)" class="tool drop" aria-label="Open menu"><i class="tri"></i></button>
        </div>
      </aside>

      <section class="dock layers">
        <div class="docktitle">
          <h2>Layers</h2>
          <button aria-label="Float"><svg viewBox="0 0 8 8"><rect x=".5" y=".5" width="7" height="7" rx="1" fill="none" stroke="#777"/><path d="M2 5.500V3.500h2.500v2zM3.500 3.500V2H6v2H4.500" fill="none" stroke="#777" stroke-width=".7"/></svg></button>
          <button aria-label="Close"><svg viewBox="0 0 8 8"><rect x=".5" y=".5" width="7" height="7" rx="1" fill="none" stroke="#777"/><path d="M2.200 2.200l3.600 3.600M5.800 2.200L2.200 5.800" stroke="#333" stroke-width="1.100"/></svg></button>
        </div>
        <div class="layertools">
          <template v-for="t in layerTools" :key="t">
            <button v-if="t === 'arrow'" class="tool narrow" aria-label="Open menu"><i class="tri"></i></button>
            <button v-else class="tool" :aria-label="t"><svg class="ico small" viewBox="0 0 18 18" v-html="icons[t]"></svg></button>
          </template>
        </div>
        <div class="tree">
          <ul>
            <li><i class="tw"></i><input id="l1" type="checkbox" checked /><svg class="sym" viewBox="0 0 12 10"><path d="M0 5h12" stroke="#edc65c"/></svg><label for="l1"><b class="ul">1d_nwk_example1_arch_bridge_L</b></label></li>
            <li><i class="tw"><i class="tri"></i></i><input id="l2" type="checkbox" checked /><svg class="sym" viewBox="0 0 12 10"><path d="M1 1l3.500 8L8 1.500h3" fill="none" stroke="#999"/></svg><label for="l2"><b>1d_nwk_RIVER_River_Sections_w_</b></label></li>
            <li class="child"><input id="l3" type="checkbox" checked /><svg class="arrowsym" viewBox="0 0 13 13"><path d="M0 5h6V0l7 6.500L6 13V8H0z" fill="#2bf51c"/></svg><label for="l3">S</label></li>
          </ul>
        </div>
        <div class="hscroll"><button aria-label="Scroll left"><i class="tri left"></i></button><span class="thumb"></span><span class="rest"></span><button aria-label="Scroll right"><i class="tri right"></i></button></div>
        <div class="docktabs"><button>Browser</button><button>Processing Toolbox</button><button class="on">Layers</button></div>
      </section>

      <section class="map">
        <svg viewBox="0 0 470 472" preserveAspectRatio="xMidYMid meet">
          <path d="M206.500 187L209 252" stroke="#f3cf62" stroke-width="1.200"/>
          <g stroke="#2df51d" stroke-width="3" fill="none"><path d="M203.500 130L205 160L206.500 187"/><path d="M209 255L211 295L209.500 325L213 364"/></g>
          <g fill="#2df51d"><path d="M203.500 125l7 8.500h-14z"/><path d="M205 156l7 8h-14z"/><path d="M209 251l7 8.500h-14z"/><path d="M210.500 291l7 8h-14z"/><path d="M209.500 320l7 8h-14z"/></g>
        </svg>
      </section>

      <section class="dock editor">
        <div class="docktitle">
          <h2>Arch Bridge Editor (Beta)</h2>
          <button aria-label="Float"><svg viewBox="0 0 8 8"><rect x=".5" y=".5" width="7" height="7" rx="1" fill="none" stroke="#777"/><path d="M2 5.500V3.500h2.500v2zM3.500 3.500V2H6v2H4.500" fill="none" stroke="#777" stroke-width=".7"/></svg></button>
          <button aria-label="Close"><svg viewBox="0 0 8 8"><rect x=".5" y=".5" width="7" height="7" rx="1" fill="none" stroke="#777"/><path d="M2.200 2.200l3.600 3.600M5.800 2.200L2.200 5.800" stroke="#333" stroke-width="1.100"/></svg></button>
        </div>
        <div class="brand">
          <svg viewBox="0 0 32 14"><path d="M0 13Q6 1 18 .8q8 0 14 9v2.700q-3-1-5-1.300Q14 4 0 13z" fill="#2b4f6b"/><path d="M5 8.500Q12 2 19 3q7 1.500 11 7-7-4.500-13-4.500T5 8.500z" fill="#55a5b5"/><path d="M0 13Q9 5.500 16 6t13 5.500q-7-3-13-3T0 13z" fill="#8ccbd3"/></svg>
          <span class="wordmark"><b>TU</b>FLOW</span>
          <a href="#documentation">Documentation</a>
        </div>
        <div class="scrollarea">
          <div class="body">
            <div class="tabs"><button class="on">Section Data</button><button>General Data</button></div>
            <div class="pane">
              <div class="cross">
                <div class="left">
                  <h3>Cross-Section:</h3>
                  <div class="namerow">
                    <label for="xs">Name:</label><input id="xs" v-model="sectionName" class="field" />
                    <button class="btn sq" aria-label="Add section"><svg viewBox="0 0 10 10"><rect width="10" height="10" rx="2" fill="#5a9460"/><path d="M5 2v6M2 5h6" stroke="#fff" stroke-width="2"/></svg></button>
                    <button class="btn sq" aria-label="Remove section"><svg viewBox="0 0 10 10"><rect y="3" width="10" height="4" rx="1" fill="#e29a5c"/><path d="M1.500 5h7" stroke="#fbe3cf"/></svg></button>
                  </div>
                  <div class="grid first">
                    <table>
                      <colgroup><col class="idx" /><col class="ch" /><col /></colgroup>
                      <thead><tr><th></th><th>Chainage (m)</th><th>Elevation (m AHD)</th></tr></thead>
                      <tbody><tr v-for="(s, i) in sections" :key="i"><th>{{ i + 1 }}</th><td>{{ s[0] }}</td><td>{{ s[1] }}</td></tr></tbody>
                    </table>
                  </div>
                </div>
                <div class="actions"><button v-for="a in actions" :key="a" class="btn">{{ a }}</button></div>
              </div>
              <h3>Bridge:</h3>
              <div class="namerow">
                <label for="br">Name:</label><input id="br" v-model="bridgeName" class="field" />
                <button class="btn sq" aria-label="Add bridge"><svg viewBox="0 0 10 10"><rect width="10" height="10" rx="2" fill="#5a9460"/><path d="M5 2v6M2 5h6" stroke="#fff" stroke-width="2"/></svg></button>
                <button class="btn sq" aria-label="Remove bridge"><svg viewBox="0 0 10 10"><rect y="3" width="10" height="4" rx="1" fill="#e29a5c"/><path d="M1.500 5h7" stroke="#fbe3cf"/></svg></button>
              </div>
              <div class="grid second">
                <table>
                  <colgroup><col class="idx" /><col class="q" /><col class="q" /><col class="q" /><col /></colgroup>
                  <thead><tr><th></th><th>Start (m)</th><th>Finish (m)</th><th>Springing Level (</th><th>Soffit Level (m RL)</th></tr></thead>
                  <tbody><tr><th>1</th><td>0.000</td><td>5.000</td><td>98.000</td><td>99.000</td></tr></tbody>
                </table>
              </div>
            </div>
            <h3 class="output">OUTPUT</h3>
          </div>
          <div class="vscroll"><button aria-label="Scroll up"><i class="tri up"></i></button><span class="above"></span><span class="thumb"></span><span class="below"></span><button aria-label="Scroll down"><i class="tri"></i></button></div>
        </div>
        <div class="final"><button class="btn reset">Reset</button><button class="btn out">Output To TUFLOW</button></div>
      </section>
    </main>

    <footer class="status">
      <div class="field locate"><svg viewBox="0 0 10 10"><circle cx="4.500" cy="4" r="3" fill="none" stroke="#888"/><path d="M6.500 6.500L9 9" stroke="#888" stroke-width="1.200"/></svg><input aria-label="Locate" placeholder="Type to locate (Ctrl+K)" /></div>
      <div class="spacer"></div>
      <label for="co">Coordinate</label><input id="co" class="field coord" value="445518,447571" />
      <svg class="sicon" viewBox="0 0 12 12"><path d="M2 4l5 6M4 2l5 6M1 3l4-1M2 7l8 3M6 2l4 4" stroke="#444" stroke-width="1.100"/><circle cx="4" cy="4" r="2" fill="none" stroke="#333"/><circle cx="8.500" cy="8" r="2.200" fill="none" stroke="#555"/></svg>
      <label for="sc">Scale</label>
      <div class="field combo scale"><select id="sc"><option>1:12367</option></select><i class="tri"></i></div>
      <svg class="sicon lock" viewBox="0 0 12 12"><path d="M3.500 6V4Q3.500 1.500 6 1.500T8.500 4v2" fill="none" stroke="#777" stroke-width="1.500"/><rect x="2" y="5.500" width="8" height="6" rx="1" fill="#666"/></svg>
      <label for="mg">Magnifier</label>
      <div class="field spin mid"><input id="mg" value="100%" /><span class="steps"><button aria-label="Up"><i class="tri up"></i></button><button aria-label="Down"><i class="tri"></i></button></span></div>
      <label for="ro" class="rot">Rotation</label>
      <div class="field spin mid"><input id="ro" value="0.0 °" /><span class="steps"><button aria-label="Up"><i class="tri up"></i></button><button aria-label="Down"><i class="tri"></i></button></span></div>
      <input id="re" class="render" type="checkbox" checked /><label for="re" class="rl">Render</label>
      <button class="crs"><svg viewBox="0 0 12 12"><path d="M6 1l5 5-5 5-5-5z" fill="#9aa39d"/><circle cx="6" cy="5.500" r="4" fill="#7f8a83"/><path d="M2 5.500h8M6 1.500v8M3.500 3.200h5M3.500 7.800h5" stroke="#c5cbc7" stroke-width=".7"/></svg>EPSG:27700</button>
      <button class="msg" aria-label="Messages"><svg viewBox="0 0 12 12"><path d="M6 1q5 0 5 4 0 2.500-2 3.500L9.500 11.500 6.500 9Q1 9 1 5T6 1z" fill="#5e5e5e"/><path d="M3.500 5h5" stroke="#ccc" stroke-dasharray="1 1"/></svg></button>
    </footer>
  </div>
</template>

<style>
html, body { margin: 0; background: #f0f0f0; }
</style>

<style scoped>
.window { display: flex; flex-direction: column; height: 100vh; min-height: 603px; overflow: hidden; background: #f0f0f0; color: #222; font: 8px/12px "Noto Sans", "Open Sans", sans-serif; }
.window * { box-sizing: border-box; }
button, input, select { font: inherit; color: inherit; margin: 0; padding: 0; border: 0; background: none; border-radius: 0; outline: 0; }
h1, h2, h3 { margin: 0; font: inherit; }
svg { display: block; }
i { display: block; }

.titlebar { display: flex; align-items: center; height: 19px; background: #fff; padding-left: 4px; color: #7d7d7d; }
.titlebar h1 { flex: 1; margin-left: 4px; }
.logo { width: 11px; height: 11px; }
.winbtns { display: flex; }
.winbtns button { width: 31px; display: grid; place-items: center; }
.winbtns svg { width: 10px; height: 10px; }
.menubar { display: flex; gap: 9px; height: 14px; padding-left: 5px; color: #969696; }
.menubar button { line-height: 13px; }

.toolbar { display: flex; height: 27px; border-bottom: 1px solid #c4c4c4; background: linear-gradient(#fdfdfd, #efefef); }
.group { display: flex; flex: 1 1 0; min-width: 0; }
.slot { flex: 1 1 0; min-width: 0; display: flex; align-items: center; justify-content: center; }
.tool { display: flex; align-items: center; justify-content: center; width: 100%; height: 22px; overflow: visible; }
.tool:disabled { opacity: .65; }
.tool.pressed { background: #dadada; border: 1px solid #b4b4b4; border-radius: 2px; }
.more { font-size: 11px; line-height: 20px; color: #555; padding-bottom: 3px; }
.ico { width: 18px; height: 18px; flex: none; overflow: visible; }
.ico.small { width: 12px; height: 12px; }
.grip { width: 3px; height: 13px; background: repeating-linear-gradient(#d8d8d8 0 1px, transparent 1px 2px); }
.sep { width: 1px; height: 20px; background: #d5d5d5; }
.tri { width: 0; height: 0; border: 3px solid transparent; border-top-color: #555; border-bottom: 0; flex: none; }
.tri.up { border: 3px solid transparent; border-bottom-color: #555; border-top: 0; }
.tri.left { border: 3px solid transparent; border-right-color: #444; border-left: 0; }
.tri.right { border: 3px solid transparent; border-left-color: #444; border-right: 0; }

.field { display: flex; align-items: center; height: 15px; background: #fff; border: 1px solid #bdbdbd; border-radius: 2px; min-width: 0; }
input.field { padding: 0 2px; }
.spin, .combo { width: 100%; padding-left: 3px; }
.spin input { flex: 1; width: 0; min-width: 0; }
.steps { display: flex; flex-direction: column; justify-content: center; gap: 3px; width: 9px; align-self: stretch; align-items: center; border-left: 1px solid #c9c9c9; background: #f6f6f6; }
.steps button { display: flex; }
.steps .tri { border-left-width: 2px; border-right-width: 2px; }
.clear svg { width: 11px; height: 8px; margin-right: 5px; }
.combo { position: relative; }
.combo select { appearance: none; width: 100%; height: 100%; }
.combo .tri { position: absolute; right: 4px; pointer-events: none; }
.flat { background: linear-gradient(#fff, #efefef); }

.work { flex: 1; display: flex; min-height: 0; }
.sidebar { width: 34px; display: flex; flex-direction: column; background: linear-gradient(90deg, #fbfbfb, #efefef); border-right: 1px solid #c4c4c4; }
.hgrip { width: 13px; height: 3px; margin: 4px 0 1px 10px; background: repeating-linear-gradient(90deg, #d2d2d2 0 1px, transparent 1px 2px); }
.side { display: flex; height: 22px; padding-left: 2px; }
.side .tool { width: 21px; }
.side .drop { width: 9px; }

.dock { display: flex; flex-direction: column; min-width: 0; }
.layers { width: 177px; }
.docktitle { display: flex; align-items: center; gap: 2px; height: 13px; padding-left: 3px; }
.docktitle h2 { flex: 1; }
.docktitle svg { width: 8px; height: 8px; }
.layertools { display: flex; height: 21px; align-items: center; padding-left: 2px; }
.layertools .tool { width: 18px; }
.layertools .narrow { width: 9px; }
.tree { flex: 1; background: #fff; border: 1px solid #bdbdbd; border-bottom: 0; overflow: hidden; min-height: 0; }
ul { list-style: none; margin: 0; padding: 0; }
li { display: flex; align-items: center; height: 13px; white-space: nowrap; padding-left: 4px; }
li label { color: #111; flex: none; }
.child { padding-left: 30px; }
.tw { width: 12px; flex: none; }
.sym { width: 12px; height: 10px; margin: 0 4px 0 4px; flex: none; }
.arrowsym { width: 13px; height: 13px; margin: 0 4px; flex: none; }
.ul { text-decoration: underline; }
input[type="checkbox"] { appearance: none; position: relative; width: 9px; height: 9px; border: 1px solid #c4c4c4; background: #fff; flex: none; }
input[type="checkbox"]:checked::after { content: ""; position: absolute; left: 2px; top: 0; width: 2px; height: 4px; border: solid #111; border-width: 0 1px 1px 0; box-shadow: 1px 0 0 #111; transform: rotate(40deg); }
.hscroll { display: flex; height: 11px; border: 1px solid #c4c4c4; background: #fff; }
.hscroll button { width: 10px; display: grid; place-items: center; }
.hscroll .thumb { flex: 123; background: #f7f7f7; border: solid #c9c9c9; border-width: 0 1px; }
.hscroll .rest { flex: 34; background: #dedede; }
.docktabs { display: flex; align-items: flex-start; height: 19px; border-top: 1px solid #c4c4c4; font-family: Roboto, sans-serif; }
.docktabs button { height: 15px; padding: 0 5px; background: #dedede; border: 1px solid #c9c9c9; border-top: 0; }
.docktabs .on { height: 16px; background: #fafafa; border-radius: 0 0 2px 2px; }

.map { flex: 1; min-width: 0; margin: 0 4px 2px; background: #fff; border: 1px solid #b9b9b9; border-top-color: #d4d4d4; }
.map svg { width: 100%; height: 100%; }

.editor { width: 334px; }
.brand { display: flex; align-items: center; height: 34px; padding: 2px 0 0 9px; }
.brand svg { width: 32px; height: 14px; }
.wordmark { font: 15px/18px "Liberation Sans", Arial, sans-serif; color: #2f4e66; }
.brand a { margin-left: 8px; color: #1414e6; font-family: Roboto, sans-serif; }
.scrollarea { flex: 1; display: flex; min-height: 0; margin: 0 3px 0 6px; border: 1px solid #bdbdbd; }
.body { flex: 1; min-width: 0; display: flex; flex-direction: column; padding: 2px 5px 0 6px; }
.tabs { display: flex; align-items: flex-end; height: 17px; margin-bottom: -1px; position: relative; font-family: Roboto, sans-serif; }
.tabs button { width: 59px; height: 15px; border: 1px solid #c4c4c4; background: #e7e7e7; border-radius: 2px 2px 0 0; }
.tabs .on { height: 17px; background: #fcfcfc; border-bottom-color: #fcfcfc; }
.pane { flex: 1; min-height: 0; display: flex; flex-direction: column; border: 1px solid #bdbdbd; background: #fbfbfb; padding: 6px 6px 6px 7px; }
.cross { display: flex; gap: 4px; flex: 1 1 178px; min-height: 0; }
.left { flex: 1; display: flex; flex-direction: column; min-width: 0; }
.namerow { display: flex; align-items: center; height: 17px; margin: 2px 0 4px; }
.namerow label { width: 25px; flex: none; font-family: Roboto, sans-serif; }
.namerow .field { flex: 1; margin-right: 5px; }
.btn { height: 15px; line-height: 12px; border: 1px solid #bcbcbc; border-radius: 2px; background: linear-gradient(#fff, #efefef); white-space: nowrap; font-family: Roboto, sans-serif; }
.sq { width: 16px; display: grid; place-items: center; flex: none; }
.sq svg { width: 10px; height: 10px; }
.sq + .sq { margin-left: 5px; }
.actions { width: 62px; height: 128px; display: flex; flex-direction: column; justify-content: space-between; padding-top: 1px; }
.grid { border: 1px solid #b9b9b9; background: linear-gradient(90deg, #efefef 7px, #fff 7px); min-height: 0; }
.first { flex: 1; margin-bottom: 3px; }
.second { flex: 1 1 138px; }
table { width: 100%; table-layout: fixed; border-collapse: collapse; }
.idx { width: 7px; }
.ch { width: 88px; }
.q { width: 62px; }
th, td { height: 14px; padding: 0 0 0 2px; font-weight: normal; text-align: left; line-height: 12px; white-space: nowrap; overflow: hidden; border-right: 1px solid #d2d2d2; border-bottom: 1px solid #d2d2d2; }
tbody th { padding: 0; background: #efefef; }
thead th { height: 13px; background: linear-gradient(#fff, #ededed); border-right-color: #c8c8c8; padding-left: 1px; }
tbody tr:nth-child(even) td { background: #e9e7e3; }
.output { height: 18px; padding-top: 4px; font-weight: bold; }
.vscroll { width: 11px; display: flex; flex-direction: column; border-left: 1px solid #c4c4c4; }
.vscroll button { height: 10px; display: grid; place-items: center; background: #fbfbfb; }
.vscroll .above { flex: 87; background: #dedede; }
.vscroll .thumb { flex: 225; background: #fbfbfb; border: solid #c4c4c4; border-width: 1px 0; }
.vscroll .below { flex: 66; background: #dedede; }
.final { display: flex; justify-content: flex-end; gap: 4px; padding: 5px 3px 7px; }
.reset { width: 56px; }
.out { width: 70px; }

.status { display: flex; align-items: center; height: 16px; padding: 0 18px 0 2px; }
.locate { width: 137px; padding-left: 5px; gap: 5px; color: #777; }
.locate svg { width: 9px; height: 9px; }
.locate input { flex: 1; min-width: 0; }
.locate input::placeholder { color: #808080; opacity: 1; }
.spacer { flex: 1; }
.status label, .crs { font-family: Roboto, sans-serif; }
.status label { margin-right: 3px; }
.coord { width: 62px; }
.sicon { width: 12px; height: 12px; margin: 0 6px 0 2px; }
.sicon.lock { margin: 0 3px 0 6px; }
.scale { width: 56px; }
.mid { width: 58px; }
.status .rot { margin-left: 5px; }
.render { margin: 0 2px 0 6px; }
.crs { display: flex; align-items: center; margin-left: 8px; }
.crs svg { width: 12px; height: 12px; }
.msg { margin-left: 12px; }
.msg svg { width: 12px; height: 12px; }
</style>
